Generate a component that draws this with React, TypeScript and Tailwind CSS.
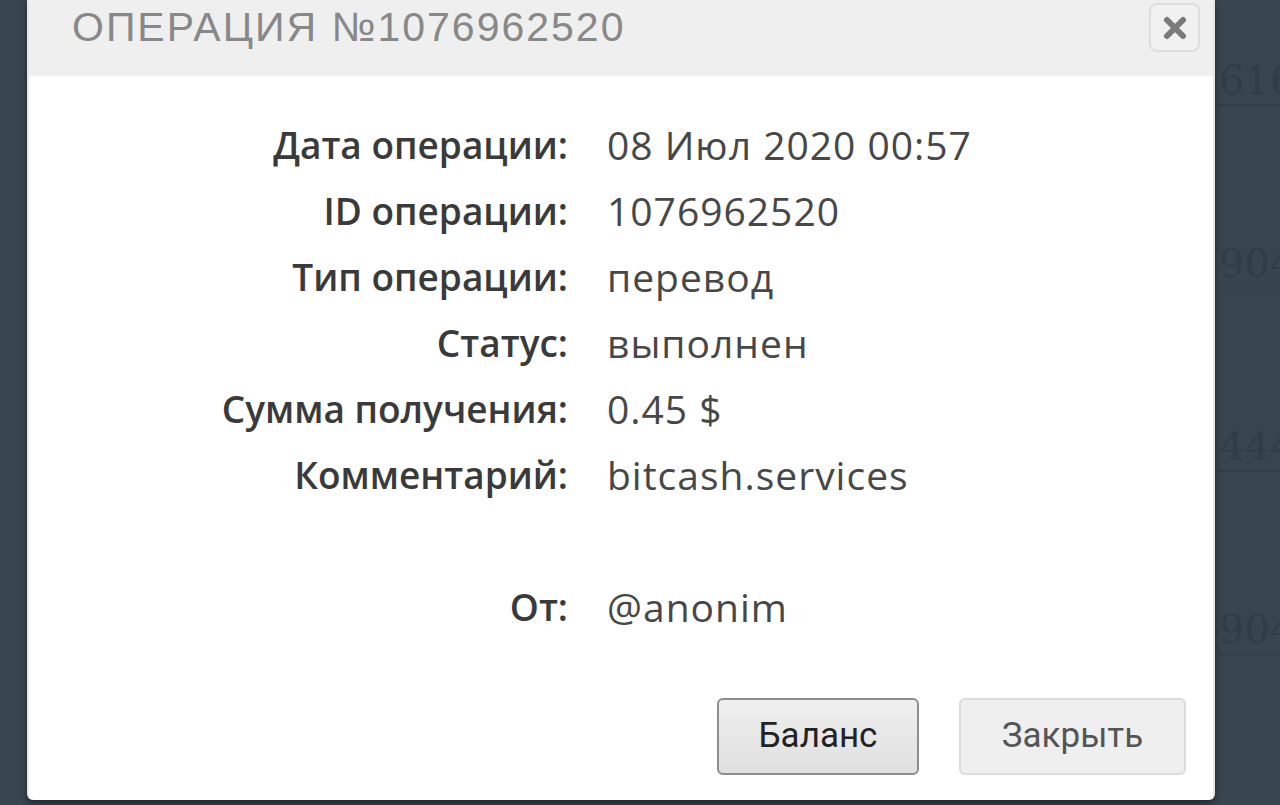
import React from 'react';

const rows: [string, string][] = [
    ['Дата операции:', '08 Июл 2020 00:57'],
    ['ID операции:', '1076962520'],
    ['Тип операции:', 'перевод'],
    ['Статус:', 'выполнен'],
    ['Сумма получения:', '0.45 $'],
    ['Комментарий:', 'bitcash.services'],
    ['', ''],
    ['От:', '@anonim'],
];

const bgRows = ['61616161', '90490490', '44444444', '90490490'];

export default function App() {
    return (
        <div className="relative h-[805px] w-[1280px] overflow-hidden bg-[#38454e]">
            {/* список операций под модалкой */}
            <div className="flex flex-col pt-[58px] pl-[1219px]" style={{ fontFamily: '"DejaVu Serif", serif' }}>
                {bgRows.map((n, i) => (
                    <div key={i} className="h-[183px] w-[61px] overflow-hidden">
                        <div className="whitespace-nowrap text-[40px] leading-[44px] text-[#313d46]">{n}</div>
                        <div className="mt-[2px] w-[200px] border-b-2 border-dotted border-[#2f3a42]"></div>
                    </div>
                ))}
            </div>

            <div className="absolute left-[27px] top-0 flex h-[800px] w-[1188px] flex-col rounded-b-[6px] border-l-[2px] border-r-[2px] border-[#e4e6e8] bg-white shadow-[0_3px_6px_rgba(0,0,0,0.45)]">
                <div className="relative h-[76px] shrink-0 bg-[#efefef] pl-[43px] pt-[5px]">
                    <h1
                        className="text-[41px] leading-[44px] tracking-[2px] text-[#888888]"
                        style={{ fontFamily: '"Liberation Sans", sans-serif' }}
                    >
                        ОПЕРАЦИЯ №1076962520
                    </h1>
                    <button className="absolute right-[13px] top-[3px] flex h-[49px] w-[51px] items-center justify-center rounded-[8px] border-2 border-[#dedede] bg-[#f1f1f1]">
                        <svg width="26" height="26" viewBox="0 0 26 26">
                            <path d="M5 5 L21 21 M21 5 L5 21" stroke="#7a7a7a" strokeWidth="6" strokeLinecap="round" />
                        </svg>
                    </button>
                </div>

                <div
                    className="grid grid-cols-[539px_1fr] gap-x-[39px] pt-[36px]"
                    style={{ fontFamily: '"Open Sans", sans-serif' }}
                >
                    {rows.map(([label, value], i) => (
                        <React.Fragment key={i}>
                            <div className="h-[66px] whitespace-nowrap text-right text-[37px] font-semibold leading-[66px] text-[#3a3a3a]">{label}</div>
                            <div className="h-[66px] whitespace-nowrap text-[39px] tracking-[1px] leading-[66px] text-[#474747]">{value}</div>
                        </React.Fragment>
                    ))}
                </div>

                <div
                    className="mt-[58px] flex justify-end gap-[40px] pr-[27px]"
                    style={{ fontFamily: 'Roboto, sans-serif' }}
                >
                    <button className="h-[77px] w-[202px] rounded-[6px] border-2 border-[#8e8e8e] bg-gradient-to-b from-[#efefef] to-[#e0e0e0] text-[35px] text-[#222222]">
                        Баланс
                    </button>
                    <button className="h-[77px] w-[227px] rounded-[6px] border-2 border-[#dcdcdc] bg-[#efefef] text-[35px] text-[#555555]">
                        Закрыть
                    </button>
                </div>
            </div>
        </div>
    );
}
